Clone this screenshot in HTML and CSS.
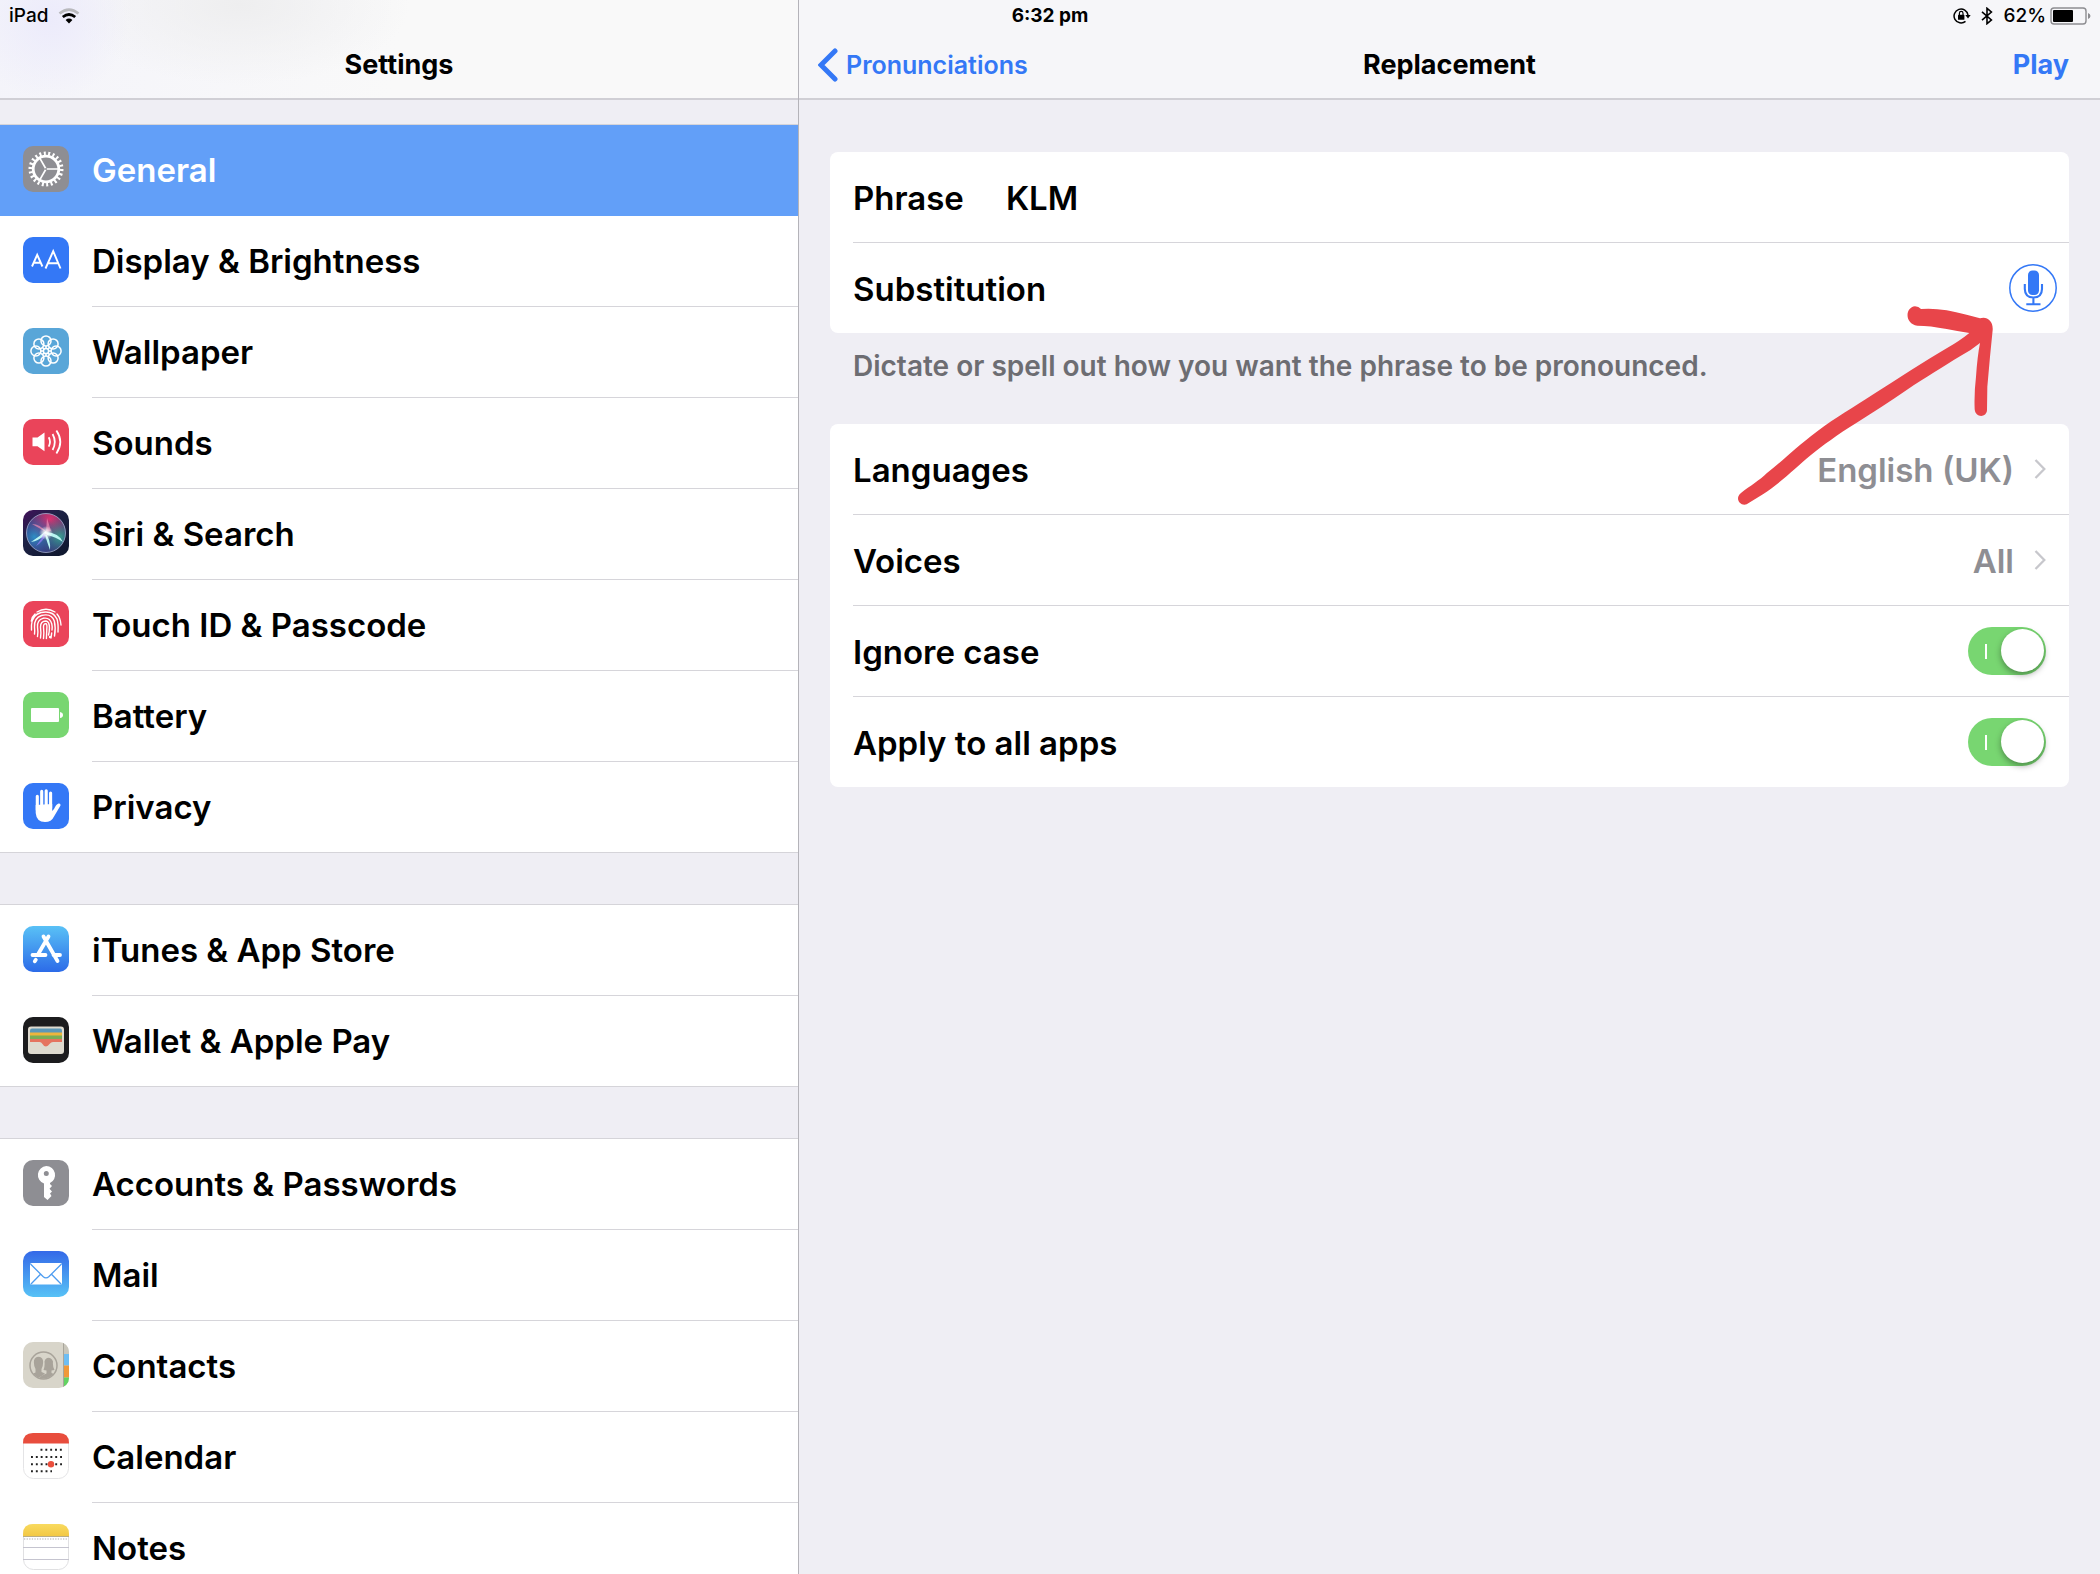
FILE: index.html
```html
<!DOCTYPE html>
<html lang="en">
<head>
<meta charset="utf-8">
<meta name="viewport" content="width=device-width, initial-scale=1">
<title>Settings</title>
<link rel="stylesheet" href="styles.css">
</head>
<body>
<div class="status-bar">
  <div class="status-side">
    <span class="status-device">iPad</span>
    <svg class="wifi" width="22" height="16" viewBox="0 0 22 16" aria-hidden="true">
      <path d="M1.500 5.600Q11-2.500 20.500 5.600" fill="none" stroke="#b9b9bd" stroke-width="2.600"/>
      <path d="M4.800 9Q11 4 17.200 9" fill="none" stroke="#000" stroke-width="2.800"/>
      <path d="M7.600 12Q11 9.200 14.400 12L11 15.500Z"/>
    </svg>
  </div>
  <span class="status-time">6:32 pm</span>
  <div class="status-side status-end">
    <svg width="18" height="18" viewBox="0 0 18 18" aria-hidden="true">
      <path d="M12.500 14.400A7 7 0 1 1 15 8" fill="none" stroke="#000" stroke-width="1.500"/>
      <path d="M12.300 8h5.400L15 11.500Z"/>
      <rect x="5" y="7.800" width="6.400" height="5" rx=".6"/>
      <path d="M6.400 8V6.200a1.800 1.800 0 0 1 3.600 0V8" fill="none" stroke="#000" stroke-width="1.200"/>
    </svg>
    <svg class="bluetooth" width="12" height="18" viewBox="0 0 12 18" aria-hidden="true">
      <path d="M1 4.800L10.400 13L6 16.700V1.300L10.400 5L1 13.200" fill="none" stroke="#000" stroke-width="1.600"/>
    </svg>
    <span class="status-percent">62%</span>
    <svg width="41" height="18" viewBox="0 0 41 18" aria-hidden="true">
      <rect x="1" y="1" width="35" height="16" rx="3" fill="none" stroke="#8d8d91" stroke-width="1.400"/>
      <rect x="3" y="3" width="20" height="12" rx="1"/>
      <path d="M38 6v6q2.500-1 2.500-3t-2.500-3" fill="#8d8d91"/>
    </svg>
  </div>
</div>

<div class="split">
  <aside class="sidebar">
    <header class="nav-bar nav-bar-tinted"><h1 class="nav-title">Settings</h1></header>
    <nav class="menu">
      <ul class="menu-group">
        <li class="menu-item"><a class="menu-link selected" href="#general" aria-current="page">
          <svg class="icon" viewBox="0 0 46 46" aria-hidden="true"><rect width="46" height="46" rx="10" fill="#8e8e93"/>
            <g fill="none" stroke="#fff"><circle cx="23" cy="23" r="12.800" stroke-width="2.800"/><circle cx="23" cy="23" r="15.600" stroke-width="3.800" pathLength="44" stroke-dasharray=".9 1.100"/><path d="M23 23H36M23 23L16.500 11.700M23 23L16.500 34.300" stroke-width="1.700"/></g><circle cx="23" cy="23" r="1" fill="#8e8e93"/></svg>
          General</a></li>
        <li class="menu-item"><a class="menu-link" href="#display">
          <svg class="icon" viewBox="0 0 46 46" aria-hidden="true"><rect width="46" height="46" rx="10" fill="#3478f6"/>
            <path d="M9 29.500L14.200 17.800L19.400 29.500M10.900 25.800H17.500M22.500 31.500L30.200 14.200L37.500 31.500M25 26.200H35.200" fill="none" stroke="#fff" stroke-width="1.900"/></svg>
          Display &amp; Brightness</a></li>
        <li class="menu-item"><a class="menu-link" href="#wallpaper">
          <svg class="icon" viewBox="0 0 46 46" aria-hidden="true"><rect width="46" height="46" rx="10" fill="#59a6d8"/>
            <g fill="none" stroke="#fff" stroke-width="1.500"><circle cx="23" cy="12.900" r="5"/><circle cx="30.100" cy="15.900" r="5"/><circle cx="33.100" cy="23" r="5"/><circle cx="30.100" cy="30.100" r="5"/><circle cx="23" cy="33.100" r="5"/><circle cx="15.900" cy="30.100" r="5"/><circle cx="12.900" cy="23" r="5"/><circle cx="15.900" cy="15.900" r="5"/><circle cx="23" cy="23" r="2.600"/><path d="M23 17.800V20.400M23 25.600V28.200M17.800 23H20.400M25.600 23H28.200M19.400 19.400L21.200 21.200M24.800 24.800L26.600 26.600M26.600 19.400L24.800 21.200M21.200 24.800L19.400 26.600"/></g></svg>
          Wallpaper</a></li>
        <li class="menu-item"><a class="menu-link" href="#sounds">
          <svg class="icon" viewBox="0 0 46 46" aria-hidden="true"><rect width="46" height="46" rx="10" fill="#ea445a"/>
            <path d="M9.500 18.500H14.500L21.500 13.500V32.200L14.500 27.300H9.500Z" fill="#fff"/><path d="M25.700 18.300Q28.300 23 25.700 27.600M29.600 15Q34 23 29.600 31M33.400 11.600Q41.200 23 33.400 34.400" fill="none" stroke="#fff" stroke-width="1.800"/></svg>
          Sounds</a></li>
        <li class="menu-item"><a class="menu-link" href="#siri">
          <svg class="icon" viewBox="0 0 46 46" aria-hidden="true">
            <defs><linearGradient id="siri-bg" x1="0" y1="0" x2=".8" y2="1"><stop stop-color="#43105a"/><stop offset=".4" stop-color="#1e2246"/><stop offset="1" stop-color="#10182f"/></linearGradient>
            <radialGradient id="siri-pink" cx=".6" cy=".15" r=".6"><stop stop-color="#d8326f"/><stop offset="1" stop-color="#d8326f" stop-opacity="0"/></radialGradient>
            <radialGradient id="siri-blue" cx=".2" cy=".6" r=".6"><stop stop-color="#2ba3d8"/><stop offset="1" stop-color="#2f4fb0" stop-opacity="0"/></radialGradient>
            <radialGradient id="siri-green" cx=".85" cy=".6" r=".5"><stop stop-color="#35b895"/><stop offset="1" stop-color="#2a7c93" stop-opacity="0"/></radialGradient>
            <radialGradient id="siri-glow"><stop stop-color="#fff"/><stop offset=".4" stop-color="#fff" stop-opacity=".7"/><stop offset="1" stop-color="#fff" stop-opacity="0"/></radialGradient></defs>
            <rect width="46" height="46" rx="10" fill="url(#siri-bg)"/>
            <circle cx="23" cy="23" r="19.500" fill="#3b3a76"/><circle cx="23" cy="23" r="19.500" fill="url(#siri-pink)"/><circle cx="23" cy="23" r="19.500" fill="url(#siri-blue)" opacity=".8"/><circle cx="23" cy="23" r="19.500" fill="url(#siri-green)" opacity=".8"/>
            <circle cx="23" cy="23" r="19.500" fill="none" stroke="#a9b4d4" stroke-opacity=".75"/>
            <path d="M23 22L9 14Q17 14 23 22M23 22L24 8L28 21Z" fill="#f08bb4" opacity=".7"/>
            <path d="M23 21Q17 26 8 32Q15 31 24 24M23 22Q36 23 40 32Q33 27 24 25M22 23Q28 29 27 40Q24 32 22 25" fill="#b9f5f2"/>
            <path d="M23 24Q20 32 13 36Q18 30 21 23" fill="#8e7af0" opacity=".8"/><circle cx="23" cy="23" r="7" fill="url(#siri-glow)"/></svg>
          Siri &amp; Search</a></li>
        <li class="menu-item"><a class="menu-link" href="#touch-id">
          <svg class="icon" viewBox="0 0 46 46" aria-hidden="true"><rect width="46" height="46" rx="10" fill="#ea445a"/>
            <g fill="none" stroke="#fff" stroke-width="1.400" stroke-linecap="round"><path d="M14 11Q23 5.500 32 11M8.300 20Q9 15.500 12 13M34 13Q37.500 17 38 24M8.500 29V24Q9 14 18 11.500Q30 9 34 18Q35.500 23 35 31M11.500 33Q12 31 11.500 26Q11 17 18.500 14.500Q28.500 12 31.300 20Q33 27 31.500 35M14.500 35.500Q15.300 31 14.500 26Q14 19 20 17.300Q27 16 28.800 23Q29.500 26 29 29M28.700 32L28 37M17.500 37Q18.300 32 17.500 26Q17.500 20 23 20Q26.500 20.500 26.400 27Q26.400 31 25.500 34M20.500 37.500Q21.200 32 20.500 26Q20.500 22.500 23 22.700Q24.300 23.500 23.800 28L23.400 37.500"/></g><circle cx="27" cy="36" r="1.200" fill="#fff"/></svg>
          Touch ID &amp; Passcode</a></li>
        <li class="menu-item"><a class="menu-link" href="#battery">
          <svg class="icon" viewBox="0 0 46 46" aria-hidden="true"><rect width="46" height="46" rx="10" fill="#78d671"/><rect x="8" y="16" width="28" height="14" rx="1" fill="#fff"/><path d="M37 20Q40 20.500 40 23T37 26Z" fill="#fff"/></svg>
          Battery</a></li>
        <li class="menu-item"><a class="menu-link" href="#privacy">
          <svg class="icon" viewBox="0 0 46 46" aria-hidden="true"><rect width="46" height="46" rx="10" fill="#3478f6"/>
            <g fill="none" stroke="#fff" stroke-width="3.100" stroke-linecap="round"><path d="M14.300 27V13.200M18.700 24V8.400M23.200 24V7.800M27.600 25V10"/></g><path d="M12.700 22V30Q13.500 39 22 39Q28.500 39 31 33.500L37.500 22.500Q37.800 20.200 35.500 20.600Q33 21.500 31 26L29.200 28V21Z" fill="#fff"/></svg>
          Privacy</a></li>
      </ul>
      <ul class="menu-group">
        <li class="menu-item"><a class="menu-link" href="#store">
          <svg class="icon" viewBox="0 0 46 46" aria-hidden="true"><defs><linearGradient id="store-bg" x2="0" y2="1"><stop stop-color="#59c1f6"/><stop offset="1" stop-color="#2c6be8"/></linearGradient></defs><rect width="46" height="46" rx="10" fill="url(#store-bg)"/>
            <g fill="none" stroke="#fff" stroke-width="3.800" stroke-linecap="round"><path d="M25.500 10.500L15.500 27.500M20.500 10.500L34.500 35M9.500 29H22.500M30.500 29H37M12.800 33.800L11.800 35.300"/></g></svg>
          iTunes &amp; App Store</a></li>
        <li class="menu-item"><a class="menu-link" href="#wallet">
          <svg class="icon" viewBox="0 0 46 46" aria-hidden="true"><rect width="46" height="46" rx="10" fill="#1c1c1e"/><rect x="5" y="9.500" width="36" height="27.500" rx="3" fill="#dedacf"/>
            <path d="M7 13.500Q7 11.500 9 11.500H37Q39 11.500 39 13.500V16H7Z" fill="#5c98b8"/><path d="M7 15.500H39V19H7Z" fill="#eeb53c"/><path d="M7 18.500H39V23H7Z" fill="#7aad55"/><path d="M7 22H39V25H30Q28 25 26.500 27T23 29.500Q21 29.500 19.500 27T16 25H7Z" fill="#e5735f"/></svg>
          Wallet &amp; Apple Pay</a></li>
      </ul>
      <ul class="menu-group">
        <li class="menu-item"><a class="menu-link" href="#accounts">
          <svg class="icon" viewBox="0 0 46 46" aria-hidden="true"><rect width="46" height="46" rx="10" fill="#8e8e93"/><path fill-rule="evenodd" d="M23.300 6A9 9 0 0 1 27 23.100V24L29 26L26.500 28.800L29 31.500L27 33.500L28.500 36L24.500 40L21 37V23.500A9 9 0 0 1 23.300 6ZM23.300 11A2.500 2.500 0 1 0 23.300 16A2.500 2.500 0 1 0 23.300 11Z" fill="#fff"/></svg>
          Accounts &amp; Passwords</a></li>
        <li class="menu-item"><a class="menu-link" href="#mail">
          <svg class="icon" viewBox="0 0 46 46" aria-hidden="true"><defs><linearGradient id="mail-bg" x2="0" y2="1"><stop stop-color="#3469e8"/><stop offset="1" stop-color="#57c2f6"/></linearGradient></defs><rect width="46" height="46" rx="10" fill="url(#mail-bg)"/><rect x="7" y="12" width="32" height="21.500" rx="1.500" fill="#fff"/><path d="M7.500 13L20 25.500Q23 28.300 26 25.500L38.500 13M8 33L17.500 23.300M38 33L28.500 23.300" fill="none" stroke="#4d9cf0" stroke-width="1.300"/></svg>
          Mail</a></li>
        <li class="menu-item"><a class="menu-link" href="#contacts">
          <svg class="icon" viewBox="0 0 46 46" aria-hidden="true"><defs><clipPath id="contacts-clip"><rect width="46" height="46" rx="10"/></clipPath><clipPath id="contacts-disc"><circle cx="20.500" cy="23.500" r="13"/></clipPath></defs>
            <g clip-path="url(#contacts-clip)"><rect width="46" height="46" fill="#d8d5ca"/><rect x="41" y="0" width="5" height="12" fill="#c9c6bb"/><rect x="41" y="12" width="5" height="11.500" fill="#6dbdf3"/><rect x="41" y="23.500" width="5" height="12" fill="#f0983a"/><rect x="41" y="35.500" width="5" height="11" fill="#62d262"/><path d="M40.500 0V46" stroke="#a8a59b"/></g>
            <g clip-path="url(#contacts-disc)" fill="#a8a39a"><path d="M6 38Q7 32 12.500 30.500V27Q10.500 24 11 18.500Q12 14.800 15.500 14.800T20 18.500Q20.500 24 18.500 27V30L22 31.500Q20 33 14 37Z"/><path d="M16 38Q16 34 23.500 31.500V28.500L20.500 28Q22 25 21.500 19.500Q22.500 15.800 25.500 15.800T30 19.500Q29.500 25 31.500 28L28.500 28.500V31L36 34V38Z"/></g><circle cx="20.500" cy="23.500" r="13.500" fill="none" stroke="#a8a39a" stroke-width="1.500"/></svg>
          Contacts</a></li>
        <li class="menu-item"><a class="menu-link" href="#calendar">
          <svg class="icon" viewBox="0 0 46 46" aria-hidden="true"><rect x=".5" y=".5" width="45" height="45" rx="10" fill="#fff" stroke="#e4e4e6"/><path d="M0 10.500V10Q0 0 10 0H36Q46 0 46 10V10.500Z" fill="#e84d3d"/>
            <g stroke="#222" stroke-width="1.900" stroke-dasharray="1.900 2.950"><path d="M17.500 16.800H39M8 24H39M8 31.200H39M8 38.300H29"/></g><circle cx="28" cy="31.200" r="3.200" fill="#ea4e3d"/></svg>
          Calendar</a></li>
        <li class="menu-item"><a class="menu-link" href="#notes">
          <svg class="icon" viewBox="0 0 46 46" aria-hidden="true"><defs><linearGradient id="notes-top" x2="0" y2="1"><stop stop-color="#f9da5f"/><stop offset="1" stop-color="#f3c844"/></linearGradient></defs><rect x=".5" y=".5" width="45" height="45" rx="10" fill="#fff" stroke="#e0e0e2"/><path d="M0 12V10Q0 0 10 0H36Q46 0 46 10V12Z" fill="url(#notes-top)"/><path d="M0 12.500H46" stroke="#b9ad86"/><path d="M1 15H45" stroke="#c9c9c9" stroke-width="1.600" stroke-dasharray="1.300 1.300"/><path d="M0 23.500H46M0 35.500H46" stroke="#c5c4cf"/></svg>
          Notes</a></li>
      </ul>
    </nav>
  </aside>

  <main class="detail">
    <header class="nav-bar nav-bar-detail">
      <a class="back" href="#pronunciations"><svg width="20" height="34" viewBox="0 0 20 34" aria-hidden="true"><path d="M17 3L3 17L17 31" fill="none" stroke="#3478f6" stroke-width="5" stroke-linecap="round" stroke-linejoin="miter"/></svg>Pronunciations</a>
      <h2 class="nav-title">Replacement</h2>
      <button class="play" type="button">Play</button>
    </header>
    <form class="form">
      <div class="card">
        <div class="row"><label class="row-text" for="phrase">Phrase</label><input class="field row-text" id="phrase" type="text" value="KLM"></div>
        <div class="row row-mic"><label class="row-text" for="substitution">Substitution</label><input class="field row-text" id="substitution" type="text">
          <button class="mic" type="button" aria-label="Dictate"><svg width="48" height="48" viewBox="0 0 48 48" aria-hidden="true"><circle cx="24" cy="24" r="23.200" fill="none" stroke="#3478f6" stroke-width="1.500"/><rect x="19" y="6.500" width="11" height="24.500" rx="4.500" fill="#3478f6"/><path d="M15.800 20V25Q16 33.500 24.400 33.500T33 25V20M24.400 33.500V40M17.300 40.200H31.500" fill="none" stroke="#3478f6" stroke-width="2.100"/></svg></button></div>
      </div>
      <p class="hint">Dictate or spell out how you want the phrase to be pronounced.</p>
      <div class="card">
        <a class="row" href="#languages"><span class="row-text">Languages</span><span class="value row-text">English (UK)</span><svg class="chevron" width="12" height="20" viewBox="0 0 12 20" aria-hidden="true"><path d="M1.500 1L10.300 10L1.500 19" fill="none" stroke="#c7c7cc" stroke-width="2.300"/></svg></a>
        <a class="row" href="#voices"><span class="row-text">Voices</span><span class="value row-text">All</span><svg class="chevron" width="12" height="20" viewBox="0 0 12 20" aria-hidden="true"><path d="M1.500 1L10.300 10L1.500 19" fill="none" stroke="#c7c7cc" stroke-width="2.300"/></svg></a>
        <div class="row"><label class="row-text" for="ignore-case">Ignore case</label><input class="switch" id="ignore-case" type="checkbox" role="switch" checked></div>
        <div class="row"><label class="row-text" for="all-apps">Apply to all apps</label><input class="switch" id="all-apps" type="checkbox" role="switch" checked></div>
      </div>
    </form>
    <svg class="arrow" viewBox="111 75 777 606" aria-hidden="true"><path fill="#e8454a" d="M123 639C150 618 180 600 200 580C250 540 290 500 350 455C410 410 460 383 520 343C590 298 680 240 740 205Q780 182 808 159Q770 153 740 147Q690 137 652 137C613 132 615 82 645 79Q656 79 663 87Q700 84 740 91C780 98 810 108 840 115C860 108 880 122 878 150L870 230L862 320L861 390C860 414 826 414 824 388Q822 340 828 290Q832 230 840 189Q815 210 780 229C730 260 680 290 620 330C570 365 520 397 470 428C410 465 370 495 330 527C290 560 240 610 190 642L140 673C120 680 103 655 123 639Z"/></svg>
  </main>
</div>
</body>
</html>
```
FILE: styles.css
```css
* {
  box-sizing: border-box;
}

body {
  position: relative;
  margin: 0;
  height: 100vh;
  overflow: hidden;
  background: #efeef4;
  color: #000;
  font-family: Inter, "Liberation Sans", sans-serif;
  font-size: 33px;
  font-weight: 600;
  line-height: 40px;
}

a {
  color: inherit;
  text-decoration: none;
}

button {
  padding: 0;
  border: 0;
  background: none;
  font: inherit;
}

/* Status bar floats over both panes */
.status-bar {
  position: absolute;
  top: 0;
  left: 0;
  right: 0;
  z-index: 2;
  display: flex;
  align-items: center;
  height: 32px;
  padding: 0 9px;
  font-size: 19px;
  font-weight: 500;
  line-height: 24px;
}

.status-side {
  display: flex;
  flex: 1;
  align-items: center;
  gap: 10px;
}

.status-end {
  justify-content: flex-end;
}

.status-time {
  font-weight: 700;
}

.status-percent {
  margin-right: -6px;
}

.split {
  display: grid;
  grid-template-columns: 38% 1fr;
  height: 100%;
}

.sidebar {
  overflow: hidden;
}

.nav-bar {
  display: grid;
  align-items: center;
  height: 100px;
  padding-top: 32px;
  border-bottom: 2px solid #d0cfd5;
  background: #f6f6f9;
  font-size: 27px;
  line-height: 32px;
}

.nav-bar-tinted {
  background:
    radial-gradient(circle at 50px 20px, #ecebfb, transparent 80px),
    radial-gradient(ellipse 170px 80px at 240px 5px, #eeeeef, transparent),
    linear-gradient(100deg, #f4f4fa, #f9f9f9 50%);
}

.nav-title {
  margin: 0;
  font-size: 27px;
  font-weight: 700;
  text-align: center;
}

.nav-bar-detail {
  grid-template-columns: 1fr auto 1fr;
  padding-left: 31px;
  padding-right: 31px;
  color: #3478f6;
}

.nav-bar-detail .nav-title {
  color: #000;
}

.back {
  display: flex;
  align-items: center;
  gap: 8px;
  margin-left: -12px;
  font-size: 25px;
}

.play {
  justify-self: end;
  color: #3478f6;
  font-weight: 700;
}

.menu {
  display: flex;
  flex-direction: column;
  gap: 51px;
  padding-top: 24px;
}

.menu-group {
  margin: 0;
  padding: 0;
  border-top: 1px solid #d5d4d9;
  border-bottom: 1px solid #d5d4d9;
  background: #fff;
  list-style: none;
}

.menu-item + .menu-item::before,
.row + .row::before {
  content: "";
  display: block;
  height: 1px;
  background: #d6d5da;
}

.menu-item + .menu-item::before {
  margin-left: 92px;
}

.menu-link {
  display: flex;
  align-items: center;
  gap: 23px;
  height: 90px;
  padding-left: 23px;
}

.selected {
  background: #629ff8;
  box-shadow: 0 1px #629ff8;
  color: #fff;
}

.menu-item:has(.selected) + .menu-item::before {
  background: none;
}

.icon {
  flex: none;
  width: 46px;
  height: 46px;
  margin-bottom: 2px;
}

.detail {
  position: relative;
  border-left: 1px solid #b4b3b9;
}

.form {
  padding: 52px 31px;
}

.card {
  border-radius: 8px;
  background: #fff;
}

.row {
  position: relative;
  display: flex;
  align-items: center;
  min-height: 90px;
  padding: 0 23px;
}

.row + .row {
  min-height: 91px;
  padding-top: 1px;
}

.row + .row::before {
  position: absolute;
  top: 0;
  left: 23px;
  right: 0;
}

.row-mic {
  padding-right: 12px;
}

.field {
  flex: 1;
  min-width: 0;
  margin-left: 42px;
  padding: 0;
  border: 0;
  outline: 0;
  background: none;
  color: inherit;
  font: inherit;
}

.row-text {
  padding-top: 2px;
}

.mic {
  display: flex;
}

.hint {
  margin: 0;
  padding: 15px 23px 40px;
  color: #6d6d72;
  font-size: 28px;
  line-height: 36px;
}

.value {
  margin-left: auto;
  color: #8e8e93;
}

.chevron {
  margin-left: 20px;
}

.switch {
  appearance: none;
  position: relative;
  width: 78px;
  height: 48px;
  margin: 0 0 0 auto;
  border-radius: 24px;
  background: #ddd;
}

.switch::before {
  content: "";
  position: absolute;
  top: 2px;
  left: 2px;
  width: 43px;
  height: 43px;
  border-radius: 50%;
  background: #fff;
  box-shadow: 0 3px 6px rgba(0, 0, 0, 0.35);
}

.switch:checked {
  background: linear-gradient(#fff, #fff) 17px 17px / 2px 15px no-repeat, #78d671;
}

.switch:checked::before {
  left: 33px;
}

/* Hand-drawn mark over the form */
.arrow {
  position: absolute;
  top: 305px;
  right: 104px;
  width: 259px;
  height: 202px;
  pointer-events: none;
}
```
